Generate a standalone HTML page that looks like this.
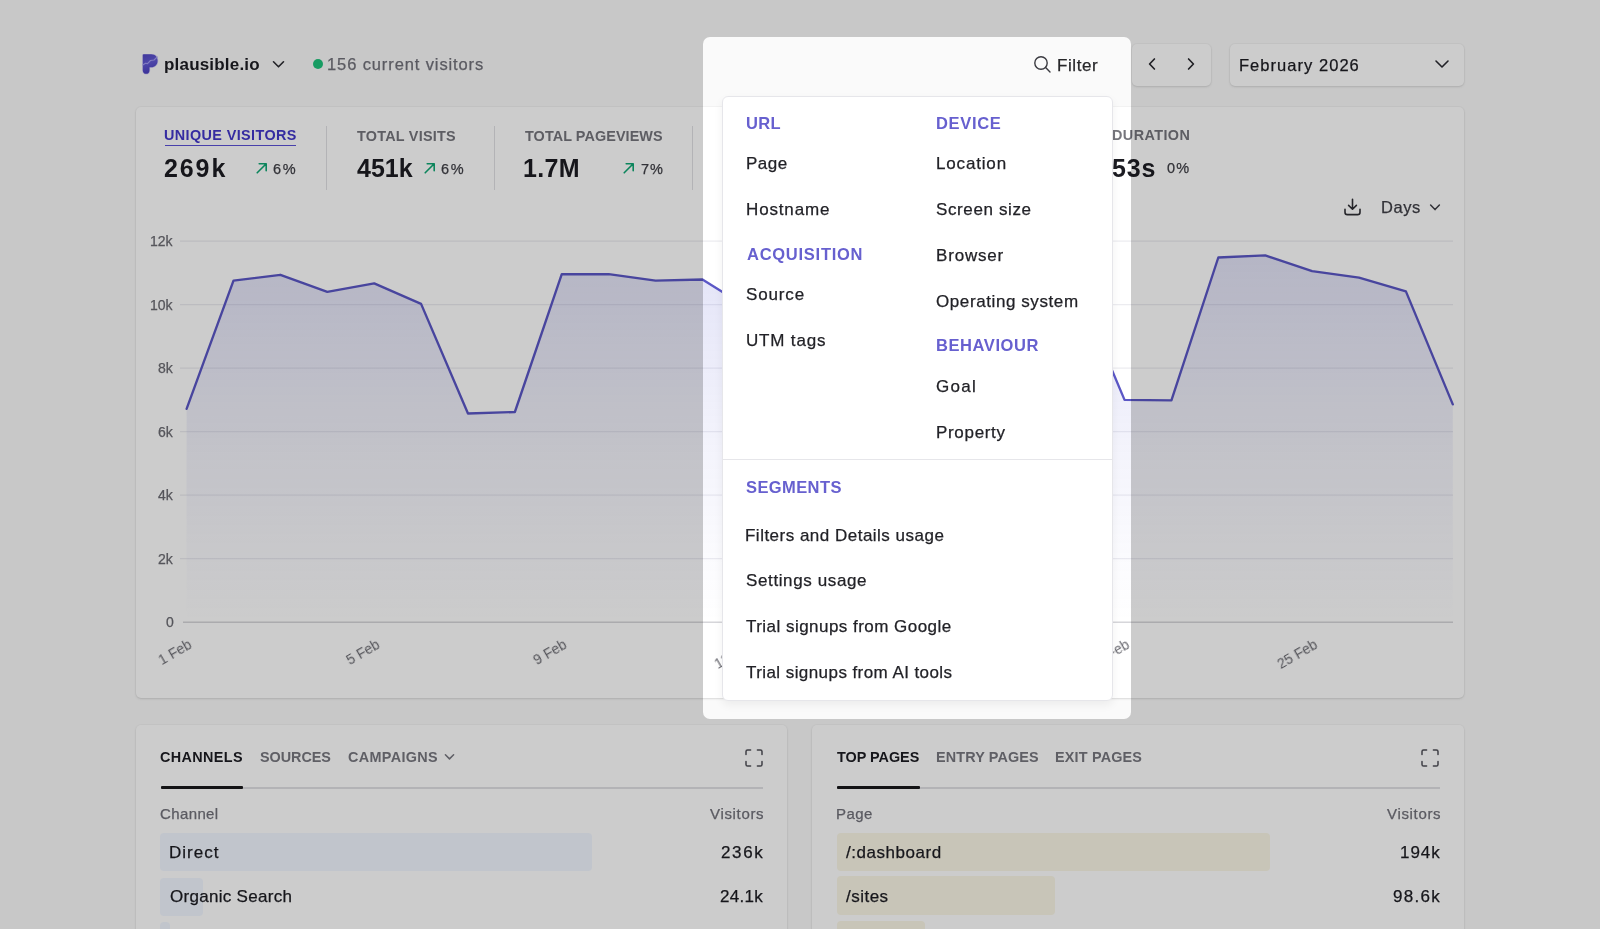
<!DOCTYPE html>
<html><head><meta charset="utf-8"><title>Plausible</title>
<style>
html,body{margin:0;padding:0}
body{width:1600px;height:929px;overflow:hidden;position:relative;background:#fafafa;font-family:"Liberation Sans",sans-serif}
.a{position:absolute}
.t{position:absolute;white-space:nowrap;will-change:transform}
.r{-webkit-text-stroke:0.25px currentColor}
.card{background:#fff;box-shadow:0 0 0 1px rgba(0,0,0,0.025),0 1px 3px rgba(0,0,0,0.08),0 1px 2px rgba(0,0,0,0.04);border-radius:5px!important}
</style></head><body>
<svg class="a" style="left:142px;top:54px" width="17" height="21" viewBox="0 0 17 21">
<defs><linearGradient id="lg" x1="0" y1="0" x2="0.25" y2="1"><stop offset="0" stop-color="#5247c4"/><stop offset="0.5" stop-color="#6259d4"/><stop offset="1" stop-color="#4a3fc0"/></linearGradient></defs>
<path d="M0.8 1.2 Q0.8 0.2 1.8 0.2 H9.2 C13.2 0.2 15.6 3.0 15.6 6.7 C15.6 10.6 12.8 13.2 9.2 13.2 H7.5 V16.4 C7.5 18.3 6 19.8 4.15 19.8 C2.3 19.8 0.8 18.3 0.8 16.4 Z" fill="#d9d5f5" stroke="#d9d5f5" stroke-width="1.4"/>
<path d="M0.8 1.2 Q0.8 0.2 1.8 0.2 H9.2 C13.2 0.2 15.6 3.0 15.6 6.7 C15.6 10.6 12.8 13.2 9.2 13.2 H7.5 V16.4 C7.5 18.3 6 19.8 4.15 19.8 C2.3 19.8 0.8 18.3 0.8 16.4 Z" fill="url(#lg)"/>
<path d="M0.8 11 L3.5 9.2 L5.5 9.6 L8.5 6.5 L12 6 L15.2 3" stroke="#a39cf0" stroke-width="1.1" fill="none" stroke-linejoin="round" stroke-linecap="round"/>
</svg>
<div class="t" style="left:164.48px;top:56.20px;font-size:17px;line-height:17px;color:#1c1c22;font-weight:700;letter-spacing:0.188px;">plausible.io</div>
<svg class="a" style="left:272px;top:60px" width="13" height="9" viewBox="0 0 13 9"><path d="M1.5 1.8 L6.5 6.8 L11.5 1.8" stroke="#2a2a30" stroke-width="1.6" fill="none" stroke-linecap="round" stroke-linejoin="round"/></svg>
<div class="a" style="left:313px;top:59.4px;width:10px;height:10px;border-radius:50%;background:#1fc47c"></div>
<div class="t r" style="left:327.44px;top:56.03px;font-size:16.5px;line-height:16.5px;color:#71717a;font-weight:400;letter-spacing:0.887px;">156 current visitors</div>
<svg class="a" style="left:1032px;top:54px" width="22" height="22" viewBox="0 0 22 22"><circle cx="9" cy="9" r="6.2" stroke="#3a3a40" stroke-width="1.4" fill="none"/><path d="M13.6 13.6 L18 18" stroke="#3a3a40" stroke-width="1.4" stroke-linecap="round"/></svg>
<div class="t r" style="left:1057.11px;top:56.60px;font-size:17px;line-height:17px;color:#27272a;font-weight:400;letter-spacing:0.580px;">Filter</div>
<div class="a card" style="left:1132px;top:44px;width:79px;height:42px;border-radius:6px"></div>
<svg class="a" style="left:1146px;top:56px" width="12" height="16" viewBox="0 0 12 16"><path d="M8.4 3 L3.6 8 L8.4 13" stroke="#2a2a30" stroke-width="1.7" fill="none" stroke-linecap="round" stroke-linejoin="round"/></svg>
<svg class="a" style="left:1185px;top:56px" width="12" height="16" viewBox="0 0 12 16"><path d="M3.6 3 L8.4 8 L3.6 13" stroke="#2a2a30" stroke-width="1.7" fill="none" stroke-linecap="round" stroke-linejoin="round"/></svg>
<div class="a card" style="left:1230px;top:44px;width:234px;height:42px;border-radius:6px"></div>
<div class="t r" style="left:1239.15px;top:56.83px;font-size:16.5px;line-height:16.5px;color:#1c1c22;font-weight:400;letter-spacing:1.038px;">February 2026</div>
<svg class="a" style="left:1434px;top:58px" width="16" height="12" viewBox="0 0 16 12"><path d="M2 3 L8 9 L14 3" stroke="#2a2a30" stroke-width="1.6" fill="none" stroke-linecap="round" stroke-linejoin="round"/></svg>
<div class="a card" style="left:136px;top:107px;width:1328px;height:591px;border-radius:8px"></div>
<div class="t" style="left:164.14px;top:128.41px;font-size:14.4px;line-height:14.4px;color:#4338ca;font-weight:700;letter-spacing:0.391px;">UNIQUE VISITORS</div>
<div class="a" style="left:165px;top:144.6px;width:131px;height:1.6px;background:#5a50d6"></div>
<div class="t" style="left:164.13px;top:156.33px;font-size:25px;line-height:25px;color:#1c1c22;font-weight:700;letter-spacing:1.908px;">269k</div>
<svg class="a" style="left:255px;top:161px" width="14" height="14" viewBox="0 0 14 14"><path d="M2.2 11.8 L11.2 2.8 M4.2 2.8 H11.2 V9.8" stroke="#10a774" stroke-width="1.6" fill="none" stroke-linecap="round" stroke-linejoin="round"/></svg>
<div class="t r" style="left:273.26px;top:161.52px;font-size:14.5px;line-height:14.5px;color:#3f3f46;font-weight:400;letter-spacing:1.796px;">6%</div>
<div class="a" style="left:326px;top:125.5px;width:1.2px;height:64px;background:#e0e0e4"></div>
<div class="t" style="left:356.84px;top:128.56px;font-size:14.4px;line-height:14.4px;color:#75757c;font-weight:700;letter-spacing:0.246px;">TOTAL VISITS</div>
<div class="t" style="left:356.62px;top:155.83px;font-size:25px;line-height:25px;color:#1c1c22;font-weight:700;letter-spacing:0.012px;">451k</div>
<svg class="a" style="left:423px;top:161px" width="14" height="14" viewBox="0 0 14 14"><path d="M2.2 11.8 L11.2 2.8 M4.2 2.8 H11.2 V9.8" stroke="#10a774" stroke-width="1.6" fill="none" stroke-linecap="round" stroke-linejoin="round"/></svg>
<div class="t r" style="left:441.06px;top:161.52px;font-size:14.5px;line-height:14.5px;color:#3f3f46;font-weight:400;letter-spacing:1.796px;">6%</div>
<div class="a" style="left:494px;top:125.5px;width:1.2px;height:64px;background:#e0e0e4"></div>
<div class="t" style="left:524.84px;top:128.56px;font-size:14.4px;line-height:14.4px;color:#75757c;font-weight:700;letter-spacing:0.084px;">TOTAL PAGEVIEWS</div>
<div class="t" style="left:523.43px;top:155.83px;font-size:25px;line-height:25px;color:#1c1c22;font-weight:700;letter-spacing:0.322px;">1.7M</div>
<svg class="a" style="left:622px;top:161px" width="14" height="14" viewBox="0 0 14 14"><path d="M2.2 11.8 L11.2 2.8 M4.2 2.8 H11.2 V9.8" stroke="#10a774" stroke-width="1.6" fill="none" stroke-linecap="round" stroke-linejoin="round"/></svg>
<div class="t r" style="left:640.56px;top:161.52px;font-size:14.5px;line-height:14.5px;color:#3f3f46;font-weight:400;letter-spacing:1.003px;">7%</div>
<div class="a" style="left:692px;top:125.5px;width:1.2px;height:64px;background:#e0e0e4"></div>
<div class="t" style="left:1112.04px;top:128.31px;font-size:14.4px;line-height:14.4px;color:#75757c;font-weight:700;letter-spacing:0.430px;">DURATION</div>
<div class="t" style="left:1112.23px;top:155.93px;font-size:25px;line-height:25px;color:#1c1c22;font-weight:700;letter-spacing:0.791px;">53s</div>
<div class="t r" style="left:1167.43px;top:161.42px;font-size:14.5px;line-height:14.5px;color:#3f3f46;font-weight:400;letter-spacing:1.126px;">0%</div>
<svg class="a" style="left:1342px;top:197px" width="21" height="20" viewBox="0 0 21 20"><path d="M10.5 2.2 V12 M6.6 8.4 L10.5 12.2 L14.4 8.4 M3 12.2 V15.2 Q3 17.6 5.4 17.6 H15.6 Q18 17.6 18 15.2 V12.2" stroke="#2f2f35" stroke-width="1.6" fill="none" stroke-linecap="round" stroke-linejoin="round"/></svg>
<div class="t r" style="left:1381.15px;top:199.23px;font-size:16.5px;line-height:16.5px;color:#3f3f46;font-weight:400;letter-spacing:0.519px;">Days</div>
<svg class="a" style="left:1428px;top:202px" width="14" height="11" viewBox="0 0 14 11"><path d="M2.6 3 L7 7.6 L11.4 3" stroke="#3f3f46" stroke-width="1.5" fill="none" stroke-linecap="round" stroke-linejoin="round"/></svg>
<svg class="a" style="left:0;top:0" width="1600" height="929" viewBox="0 0 1600 929">
<defs><linearGradient id="fg" x1="0" y1="255" x2="0" y2="622" gradientUnits="userSpaceOnUse"><stop offset="0" stop-color="#6366d4" stop-opacity="0.18"/><stop offset="0.55" stop-color="#6366d4" stop-opacity="0.07"/><stop offset="1" stop-color="#6366d4" stop-opacity="0"/></linearGradient></defs>
<line x1="180" y1="241.2" x2="1453" y2="241.2" stroke="#ececf0" stroke-width="1.2"/>
<line x1="180" y1="304.7" x2="1453" y2="304.7" stroke="#ececf0" stroke-width="1.2"/>
<line x1="180" y1="368.2" x2="1453" y2="368.2" stroke="#ececf0" stroke-width="1.2"/>
<line x1="180" y1="431.7" x2="1453" y2="431.7" stroke="#ececf0" stroke-width="1.2"/>
<line x1="180" y1="495.2" x2="1453" y2="495.2" stroke="#ececf0" stroke-width="1.2"/>
<line x1="180" y1="558.7" x2="1453" y2="558.7" stroke="#ececf0" stroke-width="1.2"/>
<line x1="183" y1="622.2" x2="1453" y2="622.2" stroke="#d6d6da" stroke-width="1.6"/>
<path d="M186.60,622.20 L186.60,408.80 L233.50,280.60 L280.39,274.80 L327.29,291.80 L374.19,283.40 L421.08,303.90 L467.98,413.50 L514.87,412.00 L561.77,274.20 L608.67,274.20 L655.56,280.60 L702.46,279.50 L749.36,308.80 L796.25,300.00 L843.15,292.00 L890.04,298.00 L936.94,420.00 L983.84,418.00 L1030.73,300.00 L1077.63,288.50 L1124.53,399.90 L1171.42,400.30 L1218.32,257.50 L1265.21,255.40 L1312.11,271.20 L1359.01,277.70 L1405.90,291.40 L1452.80,404.40 L1452.80,622.20 Z" fill="url(#fg)"/>
<polyline points="186.60,408.80 233.50,280.60 280.39,274.80 327.29,291.80 374.19,283.40 421.08,303.90 467.98,413.50 514.87,412.00 561.77,274.20 608.67,274.20 655.56,280.60 702.46,279.50 749.36,308.80 796.25,300.00 843.15,292.00 890.04,298.00 936.94,420.00 983.84,418.00 1030.73,300.00 1077.63,288.50 1124.53,399.90 1171.42,400.30 1218.32,257.50 1265.21,255.40 1312.11,271.20 1359.01,277.70 1405.90,291.40 1452.80,404.40" fill="none" stroke="#5b57c6" stroke-width="2.35" stroke-linejoin="round" stroke-linecap="round"/>
</svg>
<div class="t r" style="left:150.21px;top:234.44px;font-size:14px;line-height:14px;color:#6b6b72;font-weight:400;letter-spacing:0.000px;">12k</div>
<div class="t r" style="left:150.21px;top:297.94px;font-size:14px;line-height:14px;color:#6b6b72;font-weight:400;letter-spacing:0.000px;">10k</div>
<div class="t r" style="left:157.99px;top:361.44px;font-size:14px;line-height:14px;color:#6b6b72;font-weight:400;letter-spacing:0.000px;">8k</div>
<div class="t r" style="left:157.99px;top:424.94px;font-size:14px;line-height:14px;color:#6b6b72;font-weight:400;letter-spacing:0.000px;">6k</div>
<div class="t r" style="left:157.99px;top:488.44px;font-size:14px;line-height:14px;color:#6b6b72;font-weight:400;letter-spacing:0.000px;">4k</div>
<div class="t r" style="left:157.99px;top:551.94px;font-size:14px;line-height:14px;color:#6b6b72;font-weight:400;letter-spacing:0.000px;">2k</div>
<div class="t r" style="left:165.56px;top:615.44px;font-size:14px;line-height:14px;color:#6b6b72;font-weight:400;letter-spacing:0.000px;">0</div>
<div class="t" style="left:151.00px;top:637.00px;font-size:14px;line-height:14px;color:#6b6b72;transform-origin:100% 0;transform:rotate(-30deg)">1 Feb</div>
<div class="t" style="left:338.58px;top:637.00px;font-size:14px;line-height:14px;color:#6b6b72;transform-origin:100% 0;transform:rotate(-30deg)">5 Feb</div>
<div class="t" style="left:526.17px;top:637.00px;font-size:14px;line-height:14px;color:#6b6b72;transform-origin:100% 0;transform:rotate(-30deg)">9 Feb</div>
<div class="t" style="left:705.97px;top:637.00px;font-size:14px;line-height:14px;color:#6b6b72;transform-origin:100% 0;transform:rotate(-30deg)">13 Feb</div>
<div class="t" style="left:893.55px;top:637.00px;font-size:14px;line-height:14px;color:#6b6b72;transform-origin:100% 0;transform:rotate(-30deg)">17 Feb</div>
<div class="t" style="left:1081.14px;top:637.00px;font-size:14px;line-height:14px;color:#6b6b72;transform-origin:100% 0;transform:rotate(-30deg)">21 Feb</div>
<div class="t" style="left:1268.72px;top:637.00px;font-size:14px;line-height:14px;color:#6b6b72;transform-origin:100% 0;transform:rotate(-30deg)">25 Feb</div>
<div class="a card" style="left:136px;top:724.5px;width:651px;height:260px;border-radius:8px"></div>
<div class="a card" style="left:812px;top:724.5px;width:652px;height:260px;border-radius:8px"></div>
<div class="t" style="left:160.01px;top:750.31px;font-size:14.4px;line-height:14.4px;color:#1c1c22;font-weight:700;letter-spacing:0.364px;">CHANNELS</div>
<div class="t" style="left:259.79px;top:750.31px;font-size:14.4px;line-height:14.4px;color:#77777f;font-weight:700;letter-spacing:-0.040px;">SOURCES</div>
<div class="t" style="left:348.21px;top:750.31px;font-size:14.4px;line-height:14.4px;color:#77777f;font-weight:700;letter-spacing:0.352px;">CAMPAIGNS</div>
<svg class="a" style="left:443px;top:752px" width="13" height="10" viewBox="0 0 13 10"><path d="M2.4 2.8 L6.5 6.9 L10.6 2.8" stroke="#77777f" stroke-width="1.5" fill="none" stroke-linecap="round" stroke-linejoin="round"/></svg>
<svg class="a" style="left:744.8px;top:749px" width="18" height="18" viewBox="0 0 18 18"><path d="M1 5.6 V2.6 Q1 1 2.6 1 H5.6 M12.4 1 H15.4 Q17 1 17 2.6 V5.6 M17 12.4 V15.4 Q17 17 15.4 17 H12.4 M5.6 17 H2.6 Q1 17 1 15.4 V12.4" stroke="#505058" stroke-width="1.5" fill="none" stroke-linecap="round"/></svg>
<div class="a" style="left:160.5px;top:786.6px;width:602.5px;height:2px;background:#e0e0e4"></div>
<div class="a" style="left:160.5px;top:785.6px;width:82px;height:3.2px;background:#18181b;border-radius:1px"></div>
<div class="t r" style="left:159.84px;top:806.20px;font-size:15px;line-height:15px;color:#71717a;font-weight:400;letter-spacing:0.381px;">Channel</div>
<div class="t r" style="left:709.73px;top:806.20px;font-size:15px;line-height:15px;color:#71717a;font-weight:400;letter-spacing:0.672px;">Visitors</div>
<div class="a" style="left:160.2px;top:833px;width:432px;height:38px;border-radius:4px;background:#f2f7ff"></div>
<div class="a" style="left:160.2px;top:877.7px;width:42.5px;height:38px;border-radius:4px;background:#f2f7ff"></div>
<div class="a" style="left:160.2px;top:922px;width:10px;height:38px;border-radius:4px;background:#f2f7ff"></div>
<div class="t r" style="left:168.91px;top:844.10px;font-size:17px;line-height:17px;color:#1c1c22;font-weight:400;letter-spacing:1.025px;">Direct</div>
<div class="t r" style="left:720.75px;top:844.10px;font-size:17px;line-height:17px;color:#1c1c22;font-weight:400;letter-spacing:1.655px;">236k</div>
<div class="t r" style="left:169.89px;top:888.10px;font-size:17px;line-height:17px;color:#1c1c22;font-weight:400;letter-spacing:0.292px;">Organic Search</div>
<div class="t r" style="left:719.75px;top:888.10px;font-size:17px;line-height:17px;color:#1c1c22;font-weight:400;letter-spacing:0.311px;">24.1k</div>
<div class="t" style="left:837.24px;top:750.31px;font-size:14.4px;line-height:14.4px;color:#1c1c22;font-weight:700;letter-spacing:-0.013px;">TOP PAGES</div>
<div class="t" style="left:935.84px;top:750.31px;font-size:14.4px;line-height:14.4px;color:#77777f;font-weight:700;letter-spacing:0.137px;">ENTRY PAGES</div>
<div class="t" style="left:1054.84px;top:750.31px;font-size:14.4px;line-height:14.4px;color:#77777f;font-weight:700;letter-spacing:0.186px;">EXIT PAGES</div>
<svg class="a" style="left:1421px;top:749px" width="18" height="18" viewBox="0 0 18 18"><path d="M1 5.6 V2.6 Q1 1 2.6 1 H5.6 M12.4 1 H15.4 Q17 1 17 2.6 V5.6 M17 12.4 V15.4 Q17 17 15.4 17 H12.4 M5.6 17 H2.6 Q1 17 1 15.4 V12.4" stroke="#505058" stroke-width="1.5" fill="none" stroke-linecap="round"/></svg>
<div class="a" style="left:837px;top:786.6px;width:603px;height:2px;background:#e0e0e4"></div>
<div class="a" style="left:837px;top:785.6px;width:82.5px;height:3.2px;background:#18181b;border-radius:1px"></div>
<div class="t r" style="left:836.17px;top:806.20px;font-size:15px;line-height:15px;color:#71717a;font-weight:400;letter-spacing:0.455px;">Page</div>
<div class="t r" style="left:1386.93px;top:806.20px;font-size:15px;line-height:15px;color:#71717a;font-weight:400;letter-spacing:0.672px;">Visitors</div>
<div class="a" style="left:837px;top:832.6px;width:432.6px;height:38.3px;border-radius:4px;background:#fbf7e7"></div>
<div class="a" style="left:837px;top:876.4px;width:218px;height:38.3px;border-radius:4px;background:#fbf7e7"></div>
<div class="a" style="left:837px;top:920.5px;width:88px;height:38.3px;border-radius:4px;background:#fbf7e7"></div>
<div class="t r" style="left:846.00px;top:844.10px;font-size:17px;line-height:17px;color:#1c1c22;font-weight:400;letter-spacing:0.530px;">/:dashboard</div>
<div class="t r" style="left:1400.21px;top:844.10px;font-size:17px;line-height:17px;color:#1c1c22;font-weight:400;letter-spacing:0.968px;">194k</div>
<div class="t r" style="left:846.00px;top:888.10px;font-size:17px;line-height:17px;color:#1c1c22;font-weight:400;letter-spacing:0.487px;">/sites</div>
<div class="t r" style="left:1393.20px;top:888.10px;font-size:17px;line-height:17px;color:#1c1c22;font-weight:400;letter-spacing:1.296px;">98.6k</div>
<div class="a" style="left:702.5px;top:36.8px;width:428.3px;height:682.2px;border-radius:7px;box-shadow:0 0 0 4000px rgba(0,0,0,0.2)"></div>
<div class="a" style="left:722px;top:95.5px;width:389px;height:603px;border-radius:6px;background:#fff;border:1px solid #e6e6ea;box-shadow:0 4px 10px rgba(0,0,0,0.06)"></div>
<div class="t" style="left:746.11px;top:115.03px;font-size:16.5px;line-height:16.5px;color:#6760cf;font-weight:700;letter-spacing:0.294px;">URL</div>
<div class="t r" style="left:745.61px;top:154.90px;font-size:17px;line-height:17px;color:#222227;font-weight:400;letter-spacing:0.482px;">Page</div>
<div class="t r" style="left:745.61px;top:200.80px;font-size:17px;line-height:17px;color:#222227;font-weight:400;letter-spacing:0.853px;">Hostname</div>
<div class="t" style="left:746.59px;top:246.03px;font-size:16.5px;line-height:16.5px;color:#6760cf;font-weight:700;letter-spacing:0.735px;">ACQUISITION</div>
<div class="t r" style="left:746.23px;top:285.60px;font-size:17px;line-height:17px;color:#222227;font-weight:400;letter-spacing:0.866px;">Source</div>
<div class="t r" style="left:745.69px;top:331.60px;font-size:17px;line-height:17px;color:#222227;font-weight:400;letter-spacing:0.822px;">UTM tags</div>
<div class="t" style="left:935.90px;top:115.03px;font-size:16.5px;line-height:16.5px;color:#6760cf;font-weight:700;letter-spacing:0.663px;">DEVICE</div>
<div class="t r" style="left:935.61px;top:154.90px;font-size:17px;line-height:17px;color:#222227;font-weight:400;letter-spacing:0.834px;">Location</div>
<div class="t r" style="left:936.23px;top:200.80px;font-size:17px;line-height:17px;color:#222227;font-weight:400;letter-spacing:0.615px;">Screen size</div>
<div class="t r" style="left:935.61px;top:246.60px;font-size:17px;line-height:17px;color:#222227;font-weight:400;letter-spacing:0.820px;">Browser</div>
<div class="t r" style="left:936.19px;top:292.60px;font-size:17px;line-height:17px;color:#222227;font-weight:400;letter-spacing:0.590px;">Operating system</div>
<div class="t" style="left:935.90px;top:337.03px;font-size:16.5px;line-height:16.5px;color:#6760cf;font-weight:700;letter-spacing:0.582px;">BEHAVIOUR</div>
<div class="t r" style="left:936.15px;top:377.60px;font-size:17px;line-height:17px;color:#222227;font-weight:400;letter-spacing:1.286px;">Goal</div>
<div class="t r" style="left:935.61px;top:423.60px;font-size:17px;line-height:17px;color:#222227;font-weight:400;letter-spacing:0.681px;">Property</div>
<div class="a" style="left:723px;top:459px;width:389px;height:1.2px;background:#e6e6ea"></div>
<div class="t" style="left:746.32px;top:478.93px;font-size:16.5px;line-height:16.5px;color:#6760cf;font-weight:700;letter-spacing:0.403px;">SEGMENTS</div>
<div class="t r" style="left:745.41px;top:526.60px;font-size:17px;line-height:17px;color:#222227;font-weight:400;letter-spacing:0.490px;">Filters and Details usage</div>
<div class="t r" style="left:746.03px;top:572.30px;font-size:17px;line-height:17px;color:#222227;font-weight:400;letter-spacing:0.620px;">Settings usage</div>
<div class="t r" style="left:746.42px;top:618.30px;font-size:17px;line-height:17px;color:#222227;font-weight:400;letter-spacing:0.468px;">Trial signups from Google</div>
<div class="t r" style="left:746.42px;top:664.30px;font-size:17px;line-height:17px;color:#222227;font-weight:400;letter-spacing:0.428px;">Trial signups from AI tools</div>
</body></html>
